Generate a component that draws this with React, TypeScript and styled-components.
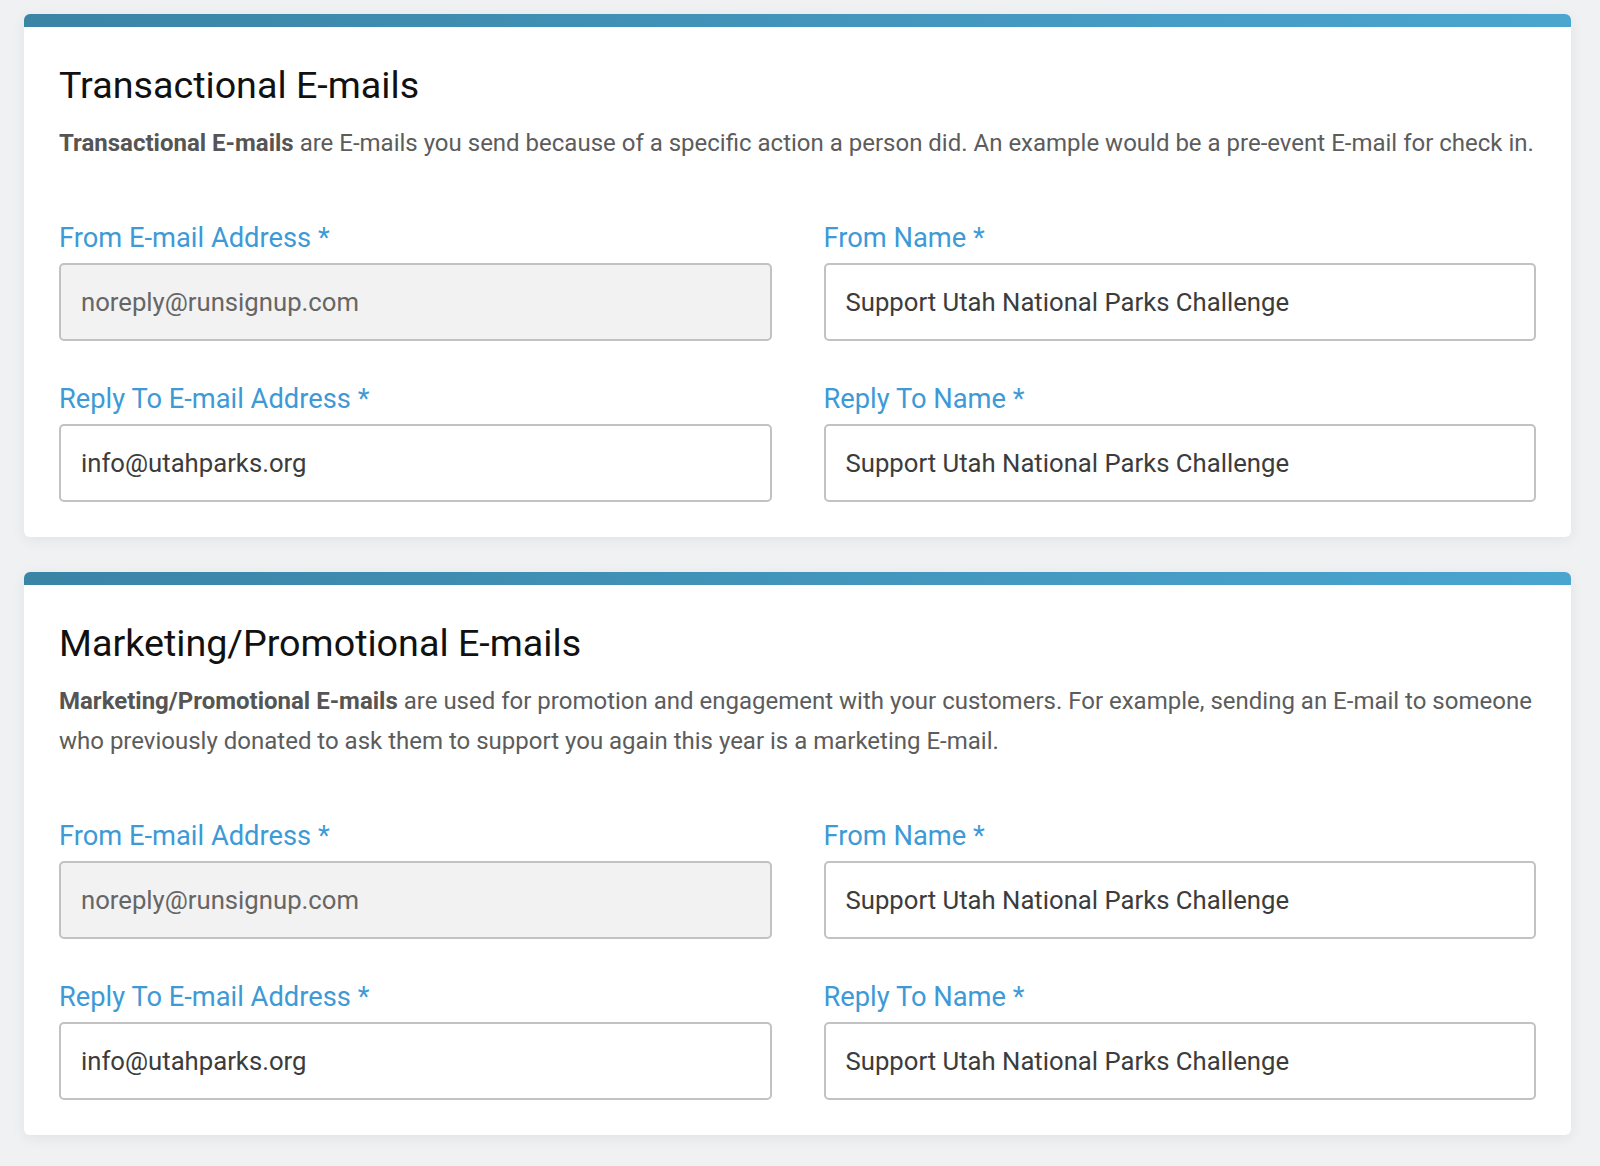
import React from "react"
import styled, { createGlobalStyle } from "styled-components"

const GlobalStyle = createGlobalStyle`
  html, body {
    margin: 0;
    padding: 0;
    background: #f0f1f3;
    font-family: Roboto, "Liberation Sans", Arial, sans-serif;
  }
`

interface Field {
  label: string
  value: string
  readOnly?: boolean
}

interface Section {
  title: string
  lead: string
  text: string
  fields: Array<Field>
}

const senderFields: Array<Field> = [
  { label: "From E-mail Address", value: "noreply@runsignup.com", readOnly: true },
  { label: "From Name", value: "Support Utah National Parks Challenge" },
  { label: "Reply To E-mail Address", value: "info@utahparks.org" },
  { label: "Reply To Name", value: "Support Utah National Parks Challenge" }
]

const sections: Array<Section> = [
  {
    title: "Transactional E-mails",
    lead: "Transactional E-mails",
    text:
      " are E-mails you send because of a specific action a person did. An example would be a pre-event E-mail for check in.",
    fields: senderFields
  },
  {
    title: "Marketing/Promotional E-mails",
    lead: "Marketing/Promotional E-mails",
    text:
      " are used for promotion and engagement with your customers. For example, sending an E-mail to someone who previously donated to ask them to support you again this year is a marketing E-mail.",
    fields: senderFields
  }
]

const App = () => {
  return (
    <Page>
      <GlobalStyle />
      {sections.map(section => (
        <Card key={section.title}>
          <CardBar />
          <CardBody>
            <Title>{section.title}</Title>
            <Lead>
              <strong>{section.lead}</strong>
              {section.text}
            </Lead>
            <FieldGrid>
              {section.fields.map(field => (
                <FieldGroup key={field.label}>
                  <Label>{field.label} *</Label>
                  <Input
                    type="text"
                    defaultValue={field.value}
                    readOnly={field.readOnly}
                    $disabled={field.readOnly}
                  />
                </FieldGroup>
              ))}
            </FieldGrid>
          </CardBody>
        </Card>
      ))}
    </Page>
  )
}

export default App

const Page = styled.div`
  min-height: 1166px;
  box-sizing: border-box;
  padding: 14px 29px 34px 24px;
  display: flex;
  flex-direction: column;
  gap: 35px;
`

const Card = styled.div`
  background: #fff;
  border-radius: 6px;
  overflow: hidden;
  box-shadow: 0 3px 14px rgba(30, 40, 60, 0.07);
`

const CardBar = styled.div`
  height: 13px;
  background: linear-gradient(90deg, #3a84a6 0%, #4aa5cf 100%);
`

const CardBody = styled.div`
  padding: 34px 35px 35px;
`

const Title = styled.h2`
  margin: 0;
  font-size: 37.7px;
  line-height: 48px;
  font-weight: 400;
  color: #111;
`

const Lead = styled.p`
  margin: 14px 0 59px;
  font-size: 24px;
  line-height: 40px;
  color: #5c5c5c;

  strong {
    font-weight: 700;
    color: #555;
  }
`

const FieldGrid = styled.div`
  display: grid;
  grid-template-columns: 1fr 1fr;
  column-gap: 52px;
  row-gap: 42px;
`

const FieldGroup = styled.div`
  display: flex;
  flex-direction: column;
  gap: 9px;
`

const Label = styled.label`
  font-size: 27.3px;
  line-height: 32px;
  color: #3d9ad6;
`

const Input = styled.input<{ $disabled?: boolean }>`
  box-sizing: border-box;
  height: 78px;
  width: 100%;
  padding: 0 20px;
  border: 2px solid #c2c2c2;
  border-radius: 5px;
  font-family: Roboto, "Liberation Sans", Arial, sans-serif;
  font-size: 25.7px;
  color: ${p => (p.$disabled ? "#666" : "#3c3c3c")};
  background: ${p => (p.$disabled ? "#f2f2f2" : "#fff")};
  outline: none;
`
